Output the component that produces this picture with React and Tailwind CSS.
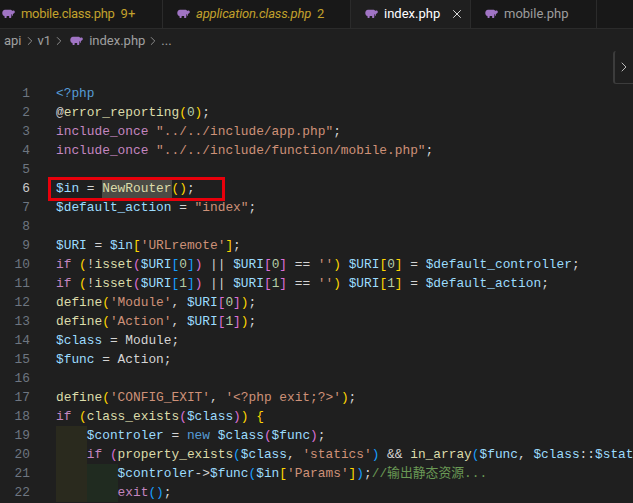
import { ChevronRight, X } from 'lucide-react'

const v = 'text-[#9cdcfe]'
const f = 'text-[#dcdcaa]'
const s = 'text-[#ce9178]'
const k = 'text-[#c586c0]'
const b = 'text-[#569cd6]'
const y = 'text-[#ffd700]'
const p = 'text-[#da70d6]'
const c = 'text-[#179fff]'
const g = 'text-[#6a9955]'
const o = 'text-[#d4d4d4]'
const n = 'text-[#b5cea8]'
const hl = 'text-[#dcdcaa] bg-[#4b4b45]'
const yi = 'bg-[#2a2a1e]'
const gi = 'bg-[#202b20]'

const lines = [
  [[b, '<?php']],
  [[o, '@'], [f, 'error_reporting'], [y, '('], [n, '0'], [y, ')'], [o, ';']],
  [[k, 'include_once'], [o, ' '], [s, '"../../include/app.php"'], [o, ';']],
  [[k, 'include_once'], [o, ' '], [s, '"../../include/function/mobile.php"'], [o, ';']],
  [],
  [[v, '$in'], [o, ' = '], [hl, 'NewRouter'], [y, '()'], [o, ';']],
  [[v, '$default_action'], [o, ' = '], [s, '"index"'], [o, ';']],
  [],
  [[v, '$URI'], [o, ' = '], [v, '$in'], [y, '['], [s, "'URLremote'"], [y, ']'], [o, ';']],
  [[k, 'if'], [o, ' '], [y, '('], [o, '!'], [f, 'isset'], [p, '('], [v, '$URI'], [c, '['], [n, '0'], [c, ']'], [p, ')'], [o, ' || '], [v, '$URI'], [p, '['], [n, '0'], [p, ']'], [o, ' == '], [s, "''"], [y, ')'], [o, ' '], [v, '$URI'], [y, '['], [n, '0'], [y, ']'], [o, ' = '], [v, '$default_controller'], [o, ';']],
  [[k, 'if'], [o, ' '], [y, '('], [o, '!'], [f, 'isset'], [p, '('], [v, '$URI'], [c, '['], [n, '1'], [c, ']'], [p, ')'], [o, ' || '], [v, '$URI'], [p, '['], [n, '1'], [p, ']'], [o, ' == '], [s, "''"], [y, ')'], [o, ' '], [v, '$URI'], [y, '['], [n, '1'], [y, ']'], [o, ' = '], [v, '$default_action'], [o, ';']],
  [[f, 'define'], [y, '('], [s, "'Module'"], [o, ', '], [v, '$URI'], [p, '['], [n, '0'], [p, ']'], [y, ')'], [o, ';']],
  [[f, 'define'], [y, '('], [s, "'Action'"], [o, ', '], [v, '$URI'], [p, '['], [n, '1'], [p, ']'], [y, ')'], [o, ';']],
  [[v, '$class'], [o, ' = Module;']],
  [[v, '$func'], [o, ' = Action;']],
  [],
  [[f, 'define'], [y, '('], [s, "'CONFIG_EXIT'"], [o, ', '], [s, "'<?php exit;?>'"], [y, ')'], [o, ';']],
  [[k, 'if'], [o, ' '], [y, '('], [f, 'class_exists'], [p, '('], [v, '$class'], [p, ')'], [y, ')'], [o, ' '], [y, '{']],
  [[yi, '    '], [v, '$controler'], [o, ' = '], [b, 'new'], [o, ' '], [v, '$class'], [p, '('], [v, '$func'], [p, ')'], [o, ';']],
  [[yi, '    '], [k, 'if'], [o, ' '], [p, '('], [f, 'property_exists'], [c, '('], [v, '$class'], [o, ', '], [s, "'statics'"], [c, ')'], [o, ' && '], [f, 'in_array'], [c, '('], [v, '$func'], [o, ', '], [v, '$class'], [o, '::'], [v, '$stat']],
  [[yi, '    '], [gi, '    '], [v, '$controler'], [o, '->'], [v, '$func'], [c, '('], [v, '$in'], [y, '['], [s, "'Params'"], [y, ']'], [c, ')'], [o, ';'], [g, '//输出静态资源...']],
  [[yi, '    '], [gi, '    '], [k, 'exit'], [c, '()'], [o, ';']],
]

function Elephant({ className }) {
  return (
    <svg viewBox="0 0 14 11" className={className} fill="#a074c4">
      <path d="M3.2 0.4h5.4c1.2 0 2 .5 2.5 1.2.9-.7 2.6-.3 2.7 1 .1 1.2-.8 1.9-1.7 2-.2 0-.4.2-.4.5v1.1c0 .4-.2.6-.5.6-.4 0-.6-.2-.6-.6V5.1H10v3.4c0 .4-.3.7-.7.7H8.2c-.3 0-.5-.2-.5-.6V7H5v1.5c0 .4-.2.7-.6.7H3.300c-.4 0-.6-.3-.6-.7V7.100C1.100 6.700.300 5.400.300 3.800.300 1.800 1.500.400 3.200.400z" />
    </svg>
  )
}

function Tab({ name, badge, italic, active, w, first, dim }) {
  return (
    <div className={`flex h-[28px] shrink-0 items-center border-r border-[#2b2b2b] ${w} ${first ? 'pl-[2px]' : 'pl-[14px]'} ${active ? 'bg-[#1f1f1f]' : ''}`}>
      <Elephant className="h-[11px] w-[13px]" />
      <span className={`ml-[6px] ${italic ? 'italic tracking-[-0.2px]' : ''} ${first ? 'tracking-[-0.3px]' : ''} ${active ? 'text-white' : dim ? 'text-[#9d9d9d]' : 'text-[#c2a12c]'}`}>
        {name}
      </span>
      {badge && <span className="ml-[6px] text-[#c2a12c]">{badge}</span>}
      {active && <X className="ml-[10px] h-[14px] w-[14px] text-[#e5e5e5]" strokeWidth={1.6} />}
    </div>
  )
}

export default function App() {
  return (
    <div className="relative h-[503px] w-[633px] overflow-hidden bg-[#1f1f1f] font-['Roboto','Noto_Sans',sans-serif] text-[13px]">
      <div className="flex h-[29px] border-b border-[#2b2b2b] bg-[#181818]">
        <Tab name="mobile.class.php" badge="9+" w="w-[163px]" first />
        <Tab name="application.class.php" badge="2" italic w="w-[188px]" />
        <Tab name="index.php" active w="w-[120px]" />
        <Tab name="mobile.php" w="w-[126px]" dim />
      </div>

      <div className="flex h-[24px] items-center pl-[4px] text-[#a0a0a0]">
        <span>api</span>
        <ChevronRight className="mx-[1px] h-[14px] w-[14px]" strokeWidth={1.4} />
        <span>v1</span>
        <ChevronRight className="mx-[1px] h-[14px] w-[14px]" strokeWidth={1.4} />
        <Elephant className="ml-[3px] h-[11px] w-[13px]" />
        <span className="ml-[6px]">index.php</span>
        <ChevronRight className="mx-[1px] h-[14px] w-[14px]" strokeWidth={1.4} />
        <span>...</span>
      </div>

      <div className="pt-[31px] font-['Liberation_Mono','Noto_Sans_CJK_SC',monospace] text-[12.83px]">
        {lines.map((tokens, i) => (
          <div key={i} className="flex h-[19px] items-center whitespace-pre">
            <span className={`mr-[26px] w-[30px] shrink-0 text-right ${i === 5 ? 'text-[#cccccc]' : 'text-[#6e7681]'}`}>{i + 1}</span>
            {tokens.map(([cls, text], j) => (
              <span key={j} className={`${cls} leading-[19px]`}>{text}</span>
            ))}
          </div>
        ))}
      </div>

      <div className="absolute left-[48px] top-[177px] h-[24px] w-[177px] border-[3px] border-[#e8000b]" />
      <div className="absolute right-0 top-[51px] flex h-[33px] w-[20px] items-center justify-center rounded-l-[3px] border-b border-l-[2px] border-[#3c3c3c] bg-[#1f1f1f]">
        <ChevronRight className="h-[16px] w-[16px] text-[#c5c5c5]" strokeWidth={1.4} />
      </div>
    </div>
  )
}
